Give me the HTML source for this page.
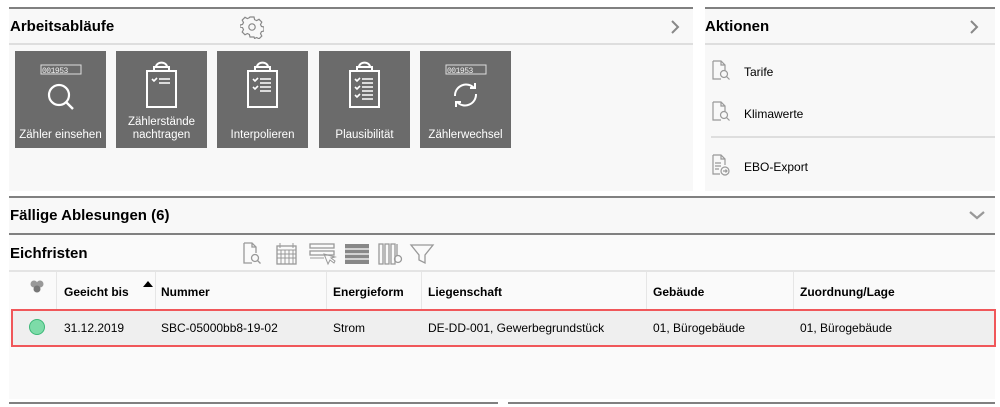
<!DOCTYPE html>
<html><head><meta charset="utf-8"><style>
*{margin:0;padding:0;box-sizing:border-box}
body{width:1000px;height:407px;background:#fff;font-family:"Liberation Sans",Arial,sans-serif;color:#000;position:relative;overflow:hidden}
.abs{position:absolute}
.h{font-weight:bold;font-size:15px}
.tile{position:absolute;top:51px;width:91px;height:97px;background:#6b6b6b;color:#fff;font-size:11.5px;text-align:center}
.tile .lbl{position:absolute;left:0;right:0;bottom:6px;line-height:13px}
.tile svg{position:absolute;left:0;top:0}
.th{position:absolute;top:285px;font-weight:bold;font-size:12px}
.td{position:absolute;top:321px;font-size:12px}
.vl{position:absolute;width:1px;background:#e6e6e6}
</style></head><body>
<!-- left top panel -->
<div class="abs" style="left:9px;top:7px;width:684px;height:184px;background:#f8f8f8;border-top:2px solid #808080"></div>
<div class="abs" style="left:9px;top:43px;width:684px;height:2px;background:#dedede"></div>
<div class="abs h" style="left:10px;top:18px">Arbeitsabläufe</div>
<svg class="abs" style="left:240px;top:15px" width="24" height="24" viewBox="0 0 24 24" fill="none" stroke="#888" stroke-width="1.2"><path d="M10 2h4l.6 2.6 2 1 2.4-1.3 2.8 2.8-1.3 2.4 1 2 2.5.5v4l-2.5.6-1 2 1.3 2.4-2.8 2.8-2.4-1.3-2 1L14 22h-4l-.6-2.5-2-1-2.4 1.3-2.8-2.8 1.3-2.4-1-2L0 12v-2l2.5-.5 1-2L2.2 5.1 5 2.3l2.4 1.3 2-1z"/><circle cx="12" cy="12" r="3.2"/></svg>
<svg class="abs" style="left:669px;top:19px" width="12" height="16" viewBox="0 0 12 16"><path d="M3 2l6 6-6 6" fill="none" stroke="#888" stroke-width="2"/></svg>

<div class="tile" style="left:15px"><svg width="91" height="97" viewBox="0 0 91 97"><rect x="26" y="14" width="40" height="9" fill="none" stroke="#ddd" stroke-width="1"/><text x="27" y="22" font-size="8" fill="#eee" font-family="Liberation Mono" letter-spacing="-0.5">001953</text><circle cx="44" cy="44" r="10" fill="none" stroke="#fff" stroke-width="2.2"/><path d="M51 51l7 7" stroke="#fff" stroke-width="2.4"/></svg><div class="lbl">Zähler einsehen</div></div>
<div class="tile" style="left:116px"><svg width="91" height="97" viewBox="0 0 91 97" fill="none" stroke="#fff" stroke-width="2"><rect x="31" y="20" width="29" height="36"/><path d="M38 20v-4h15v4M40 16a5 4 0 0 1 11 0"/><path d="M36 28l2 2 3-3M43 28h11M43 32h11" stroke-width="1.6"/></svg><div class="lbl">Zählerstände<br>nachtragen</div></div>
<div class="tile" style="left:217px"><svg width="91" height="97" viewBox="0 0 91 97" fill="none" stroke="#fff" stroke-width="2"><rect x="31" y="20" width="29" height="36"/><path d="M38 20v-4h15v4M40 16a5 4 0 0 1 11 0"/><path d="M36 28l2 2 3-3M43 28h11M43 32h11M36 36l2 2 3-3M43 36h11M43 40h11" stroke-width="1.6"/></svg><div class="lbl">Interpolieren</div></div>
<div class="tile" style="left:319px"><svg width="91" height="97" viewBox="0 0 91 97" fill="none" stroke="#fff" stroke-width="2"><rect x="31" y="20" width="29" height="36"/><path d="M38 20v-4h15v4M40 16a5 4 0 0 1 11 0"/><path d="M36 28l2 2 3-3M43 28h11M43 32h11M36 36l2 2 3-3M43 36h11M43 40h11M36 44l2 2 3-3M43 44h11M43 48h11" stroke-width="1.6"/></svg><div class="lbl">Plausibilität</div></div>
<div class="tile" style="left:420px"><svg width="91" height="97" viewBox="0 0 91 97"><rect x="26" y="14" width="40" height="9" fill="none" stroke="#ddd" stroke-width="1"/><text x="27" y="22" font-size="8" fill="#eee" font-family="Liberation Mono" letter-spacing="-0.5">001953</text><path d="M35 45a11 11 0 0 1 19-8M56 43a11 11 0 0 1-19 8" fill="none" stroke="#fff" stroke-width="2"/><path d="M50 37h5v-5M41 51h-5v5" fill="none" stroke="#fff" stroke-width="2"/></svg><div class="lbl">Zählerwechsel</div></div>

<!-- right panel -->
<div class="abs" style="left:705px;top:7px;width:290px;height:184px;background:#f8f8f8;border-top:2px solid #808080"></div>
<div class="abs" style="left:705px;top:43px;width:290px;height:2px;background:#dedede"></div>
<div class="abs h" style="left:705px;top:18px">Aktionen</div>
<svg class="abs" style="left:968px;top:19px" width="12" height="16" viewBox="0 0 12 16"><path d="M3 2l6 6-6 6" fill="none" stroke="#888" stroke-width="2"/></svg>
<svg class="abs" style="left:711px;top:60px" width="22" height="22" viewBox="0 0 22 22" fill="none" stroke="#999" stroke-width="1.2"><path d="M2 1h8l4 4v5M2 1v18h8M10 1v4h4"/><circle cx="13" cy="14" r="3.5"/><path d="M15.5 16.5l3 3"/></svg>
<div class="abs" style="left:744px;top:65px;font-size:12px">Tarife</div>
<svg class="abs" style="left:711px;top:101px" width="22" height="22" viewBox="0 0 22 22" fill="none" stroke="#999" stroke-width="1.2"><path d="M2 1h8l4 4v5M2 1v18h8M10 1v4h4"/><circle cx="13" cy="14" r="3.5"/><path d="M15.5 16.5l3 3"/></svg>
<div class="abs" style="left:744px;top:107px;font-size:12px">Klimawerte</div>
<div class="abs" style="left:711px;top:136px;width:284px;height:2px;background:#dedede"></div>
<svg class="abs" style="left:711px;top:154px" width="22" height="24" viewBox="0 0 22 24" fill="none" stroke="#999" stroke-width="1.2"><path d="M2 1h8l4 4v6M2 1v19h7M10 1v4h4M4 9h6M4 12h6M4 15h4"/><circle cx="14" cy="17" r="4"/><path d="M12 17h4M14.5 15.5l1.5 1.5-1.5 1.5"/></svg>
<div class="abs" style="left:744px;top:160px;font-size:12px">EBO-Export</div>

<!-- Fällige -->
<div class="abs" style="left:9px;top:196px;width:986px;height:39px;background:#f8f8f8;border-top:2px solid #808080;border-bottom:2px solid #808080"></div>
<div class="abs h" style="left:10px;top:207px">Fällige Ablesungen (6)</div>
<svg class="abs" style="left:968px;top:209px" width="18" height="12" viewBox="0 0 18 12"><path d="M2 3l7 6 7-6" fill="none" stroke="#999" stroke-width="2.2"/></svg>

<!-- Eichfristen -->
<div class="abs" style="left:9px;top:235px;width:986px;height:164px;background:#fafafa"></div>
<div class="abs h" style="left:10px;top:245px">Eichfristen</div>
<svg class="abs" style="left:240px;top:240px" width="205" height="28" viewBox="0 0 205 28" fill="none" stroke="#999" stroke-width="1.3">
<path d="M4 3h8l4 4v6M4 3v20h8M12 3v4h4"/><circle cx="15" cy="18" r="3.5"/><path d="M17.5 20.5l3 3"/>
<rect x="37" y="6" width="19" height="18"/><path d="M37 10h19M40 3v5M53 3v5M37 14h19M37 18h19M41 10v14M45 10v14M49 10v14M53 10v14" stroke-width="1"/>
<rect x="70" y="4" width="24" height="4"/><rect x="70" y="11" width="24" height="4"/><path d="M70 18h14M84 14l4 10 2-4 4 3 1-2-4-3 4-1z" stroke-width="1"/>
<rect x="105" y="4" width="24" height="20" fill="#888" stroke="none"/><path d="M105 9h24M105 14h24M105 19h24" stroke="#fff" stroke-width="1.2"/>
<path d="M139 4v20h4V4zM145 4v20h4V4zM151 4v20h4V4zM157 4v12"/><circle cx="158" cy="19" r="3.5"/>
<path d="M171 5h22l-8 10v8l-6-3v-5z"/></svg>

<!-- table -->
<div class="abs" style="left:9px;top:270px;width:986px;height:2px;background:#e4e4e4"></div>
<div class="vl" style="left:56px;top:272px;height:74px"></div>
<div class="vl" style="left:155px;top:272px;height:74px"></div>
<div class="vl" style="left:326px;top:272px;height:74px"></div>
<div class="vl" style="left:421px;top:272px;height:74px"></div>
<div class="vl" style="left:646px;top:272px;height:74px"></div>
<div class="vl" style="left:793px;top:272px;height:74px"></div>
<svg class="abs" style="left:29px;top:280px" width="16" height="14" viewBox="0 0 16 14"><circle cx="5" cy="4" r="3.5" fill="#999"/><circle cx="11" cy="4" r="3.5" fill="#999"/><circle cx="8" cy="9" r="3.5" fill="#777"/></svg>
<div class="th" style="left:64px">Geeicht bis</div>
<svg class="abs" style="left:143px;top:281px" width="10" height="6"><path d="M0 6L5 0l5 6z" fill="#000"/></svg>
<div class="th" style="left:161px">Nummer</div>
<div class="th" style="left:333px">Energieform</div>
<div class="th" style="left:428px">Liegenschaft</div>
<div class="th" style="left:653px">Gebäude</div>
<div class="th" style="left:800px">Zuordnung/Lage</div>
<div class="abs" style="left:11px;top:309px;width:985px;height:38px;background:#efefef;border:2px solid #f0575a"></div>
<div class="abs" style="left:29px;top:319px;width:16px;height:16px;border-radius:50%;background:#7ddba8;border:1px solid #3cb878"></div>
<div class="td" style="left:64px">31.12.2019</div>
<div class="td" style="left:161px">SBC-05000bb8-19-02</div>
<div class="td" style="left:333px">Strom</div>
<div class="td" style="left:428px">DE-DD-001, Gewerbegrundstück</div>
<div class="td" style="left:653px">01, Bürogebäude</div>
<div class="td" style="left:800px">01, Bürogebäude</div>
<div class="abs" style="left:9px;top:402px;width:489px;height:2px;background:#808080"></div>
<div class="abs" style="left:508px;top:402px;width:487px;height:2px;background:#808080"></div>
</body></html>
